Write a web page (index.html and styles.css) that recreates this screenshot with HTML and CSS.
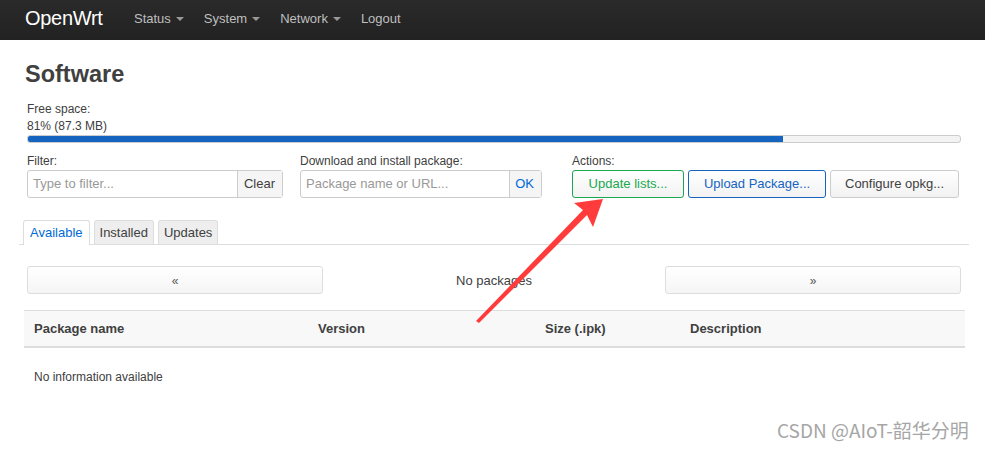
FILE: index.html
```html
<!DOCTYPE html>
<html>
<head>
<meta charset="utf-8">
<link rel="stylesheet" href="styles.css">
</head>
<body>
<header class="topbar">
  <a class="brand">OpenWrt</a>
  <nav class="menu">
    <span class="menu-item">Status <i class="caret"></i></span>
    <span class="menu-item">System <i class="caret"></i></span>
    <span class="menu-item">Network <i class="caret"></i></span>
    <span class="menu-item">Logout</span>
  </nav>
</header>
<main class="main">
  <h2 class="title">Software</h2>
  <div class="space">
    <div class="label">Free space:</div>
    <div class="label">81% (87.3 MB)</div>
    <div class="bar"><div class="bar-fill" style="width:81%"></div></div>
  </div>
  <div class="controls">
    <div class="ctl ctl-filter">
      <div class="label">Filter:</div>
      <div class="group">
        <span class="field">Type to filter...</span>
        <span class="addon">Clear</span>
      </div>
    </div>
    <div class="ctl ctl-dl">
      <div class="label">Download and install package:</div>
      <div class="group">
        <span class="field">Package name or URL...</span>
        <span class="addon addon-blue">OK</span>
      </div>
    </div>
    <div class="ctl ctl-actions">
      <div class="label">Actions:</div>
      <div class="btns">
        <span class="btn btn-green">Update lists...</span>
        <span class="btn btn-blue">Upload Package...</span>
        <span class="btn">Configure opkg...</span>
      </div>
    </div>
  </div>
  <div class="tabs">
    <span class="tab active">Available</span>
    <span class="tab">Installed</span>
    <span class="tab">Updates</span>
  </div>
  <div class="pager">
    <span class="pbtn">&laquo;</span>
    <span class="pinfo">No packages</span>
    <span class="pbtn">&raquo;</span>
  </div>
  <div class="table">
    <div class="thead">
      <span class="th c1">Package name</span>
      <span class="th c2">Version</span>
      <span class="th c3">Size (.ipk)</span>
      <span class="th c4">Description</span>
    </div>
    <div class="empty">No information available</div>
  </div>
</main>
<svg class="arrow" width="985" height="449" viewBox="0 0 985 449">
  <polygon fill="#ff3b3b" points="476,321 583,210 574,203 603,199 593,227 587,215 479,323"/>
</svg>
<div class="watermark">CSDN @AIoT-韶华分明</div>
</body>
</html>
```
FILE: styles.css
```css
html, body {
  margin: 0;
  padding: 0;
  background: #fff;
  font-family: "Liberation Sans", Arial, sans-serif;
  font-size: 12px;
  color: #404040;
}
.topbar {
  height: 40px;
  background: linear-gradient(#2a2a2a, #222);
  display: flex;
  align-items: center;
  padding-left: 25px;
  box-sizing: border-box;
}
.brand {
  color: #fff;
  font-size: 20px;
  width: 109px;
  letter-spacing: -0.3px;
  margin-top: -3px;
}
.menu {
  display: flex;
  margin-top: -3px;
}
.menu-item {
  color: #bfbfbf;
  font-size: 13px;
  margin-right: 20px;
  display: flex;
  align-items: center;
}
.caret {
  display: inline-block;
  width: 0;
  height: 0;
  border-left: 4px solid transparent;
  border-right: 4px solid transparent;
  border-top: 4px solid #999;
  margin-left: 5px;
  margin-top: 1px;
}
.main {
  padding: 0 24px 0 24px;
  position: relative;
}
.title {
  margin: 0;
  padding-top: 19px;
  font-size: 23.5px;
  line-height: 30px;
  font-weight: bold;
  color: #404040;
  padding-left: 1px;
}
.space {
  margin-top: 12px;
  padding-left: 3px;
}
.label {
  line-height: 17px;
  font-size: 12px;
}
.bar {
  height: 6px;
  border: 1px solid #ccc;
  border-radius: 3px;
  background: #f3f3f3;
  overflow: hidden;
}
.bar-fill {
  height: 100%;
  background: #1565c0;
}
.controls {
  display: flex;
  margin-top: 10px;
  padding-left: 3px;
}
.ctl-filter { width: 273px; }
.ctl-dl { width: 272px; }
.group {
  display: flex;
  height: 28px;
  border: 1px solid #ccc;
  border-radius: 3px;
  box-sizing: border-box;
  font-size: 13px;
}
.ctl-filter .group { width: 256px; }
.ctl-dl .group { width: 242px; }
.field {
  flex: 1;
  color: #999;
  padding-left: 5px;
  line-height: 26px;
}
.addon {
  border-left: 1px solid #ccc;
  background: #f5f5f5;
  padding: 0 7px 0 6px;
  line-height: 26px;
  color: #404040;
}
.addon-blue {
  color: #0069d6;
  background: #f5f5f5;
  padding: 0 7px 0 5px;
}
.btns {
  display: flex;
  gap: 4px;
}
.btn {
  height: 28px;
  box-sizing: border-box;
  border: 1px solid #ccc;
  border-radius: 3px;
  background: linear-gradient(#fff, #f2f2f2);
  line-height: 26px;
  font-size: 13px;
  padding: 0 14px;
  color: #404040;
}
.btn-green {
  border-color: #1aa84f;
  color: #1aa84f;
  width: 112px;
  text-align: center;
  padding: 0;
}
.btn-blue {
  border-color: #1565c0;
  color: #1565c0;
  width: 138px;
  text-align: center;
  padding: 0;
}
.tabs {
  display: flex;
  margin-top: 22px;
  border-bottom: 1px solid #ddd;
  margin-left: -5px;
  margin-right: -8px;
  padding-left: 4px;
  gap: 4px;
}
.tab {
  height: 24px;
  line-height: 23px;
  padding: 0 5px;
  border: 1px solid #ddd;
  border-bottom: none;
  border-radius: 3px 3px 0 0;
  background: #eee;
  font-size: 13px;
  color: #404040;
  margin-bottom: -1px;
  box-sizing: border-box;
}
.tab.active {
  background: #fff;
  color: #0069d6;
  height: 25px;
  padding: 0 6px;
}
.pager {
  display: flex;
  align-items: center;
  margin-top: 21px;
  padding-left: 3px;
}
.pbtn {
  width: 296px;
  height: 28px;
  box-sizing: border-box;
  border: 1px solid #ddd;
  border-radius: 3px;
  background: linear-gradient(#fff, #f5f5f5);
  text-align: center;
  line-height: 28px;
  font-size: 12px;
  color: #555;
}
.pinfo {
  flex: 1;
  text-align: center;
  font-size: 13px;
}
.table {
  margin-top: 16px;
  margin-right: -4px;
}
.thead {
  display: flex;
  height: 38px;
  box-sizing: border-box;
  border-top: 1px solid #ddd;
  border-bottom: 2px solid #ddd;
  background: #f8f8f8;
  align-items: center;
}
.th {
  font-weight: bold;
  font-size: 13px;
  padding-left: 10px;
  box-sizing: border-box;
}
.c1 { width: 284px; }
.c2 { width: 227px; }
.c3 { width: 145px; }
.c4 { flex: 1; }
.empty {
  padding: 21px 10px;
  font-size: 12px;
  line-height: 17px;
}
.arrow {
  position: absolute;
  left: 0;
  top: 0;
  pointer-events: none;
}
.watermark {
  position: absolute;
  left: 777px;
  top: 416px;
  font-family: "Noto Sans CJK SC", "Liberation Sans", sans-serif;
  font-size: 19px;
  color: #a6a6a6;
  white-space: nowrap;
}
```
